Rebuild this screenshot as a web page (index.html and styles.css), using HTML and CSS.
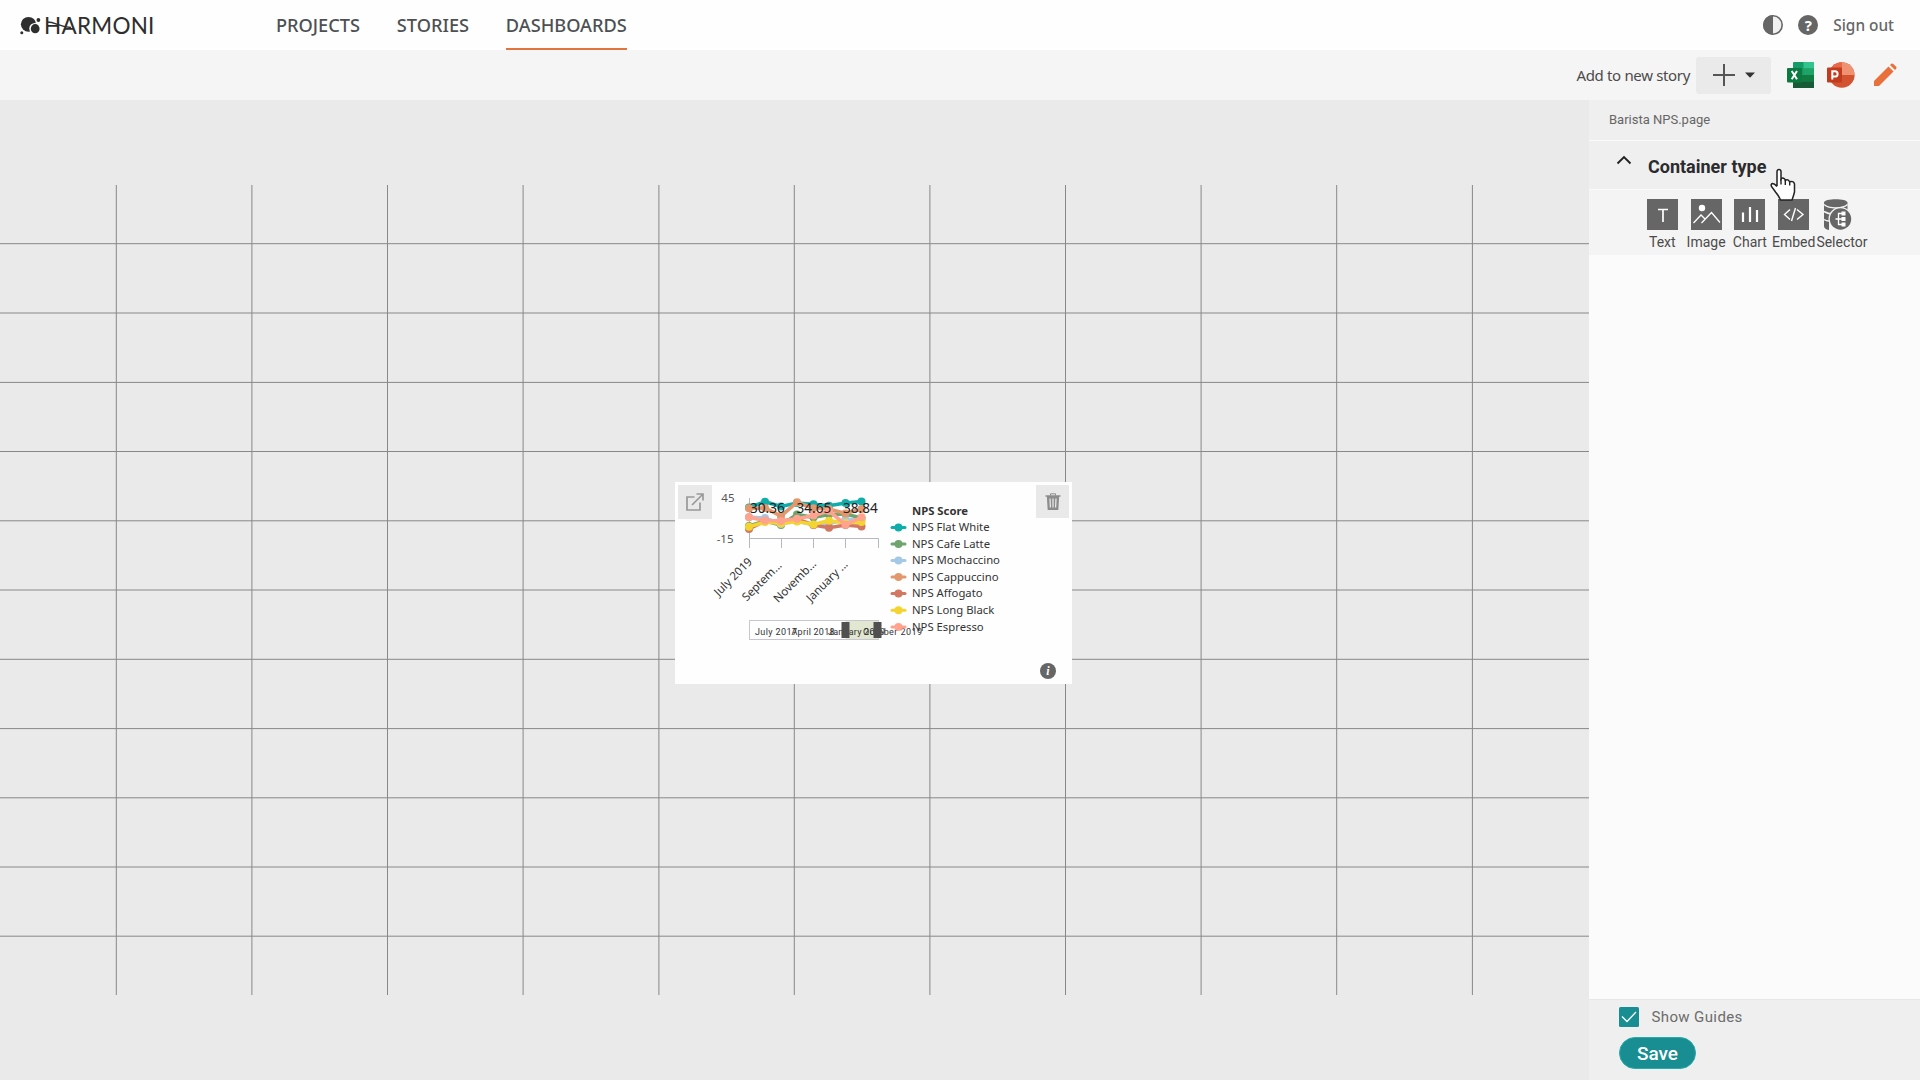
FILE: index.html
```html
<!DOCTYPE html>
<html lang="en">
<head>
<meta charset="utf-8">
<title>Harmoni - Dashboards</title>
<link rel="stylesheet" href="styles.css">
</head>
<body>
<header class="topbar">
  <a class="logo">
    <svg width="21" height="19" viewBox="0 0 21 19">
      <g fill="#2e2e2e"><ellipse cx="8.5" cy="8.300" rx="7.600" ry="7.400"/><ellipse cx="14.900" cy="12.600" rx="5.600" ry="5.700" fill="#fff"/><ellipse cx="15.200" cy="12.700" rx="4.400" ry="4.600"/><circle cx="18.400" cy="4" r="1.900"/><circle cx="1.800" cy="16.700" r="1.500"/></g>
    </svg>
    <span class="wordmark">HARMONI<svg class="swash" width="26" height="10" viewBox="0 0 26 10"><path d="M1 2C10 2 13 7 25 7.500" fill="none" stroke="#2e2e2e" stroke-width="1.300"/></svg></span>
  </a>
  <nav class="nav"><a>PROJECTS</a><a>STORIES</a><a class="active">DASHBOARDS</a></nav>
  <div class="account">
    <svg width="20" height="20" viewBox="0 0 20 20"><circle cx="10" cy="10" r="9.200" fill="#f0f0f0" stroke="#666" stroke-width="1.600"/><path d="M10 0a10 10 0 0 0 0 20z" fill="#666"/></svg>
    <span class="help">?</span>
    <a class="signout">Sign out</a>
  </div>
</header>
<div class="toolbar">
  <span class="story">Add to new story</span>
  <button class="add"><svg width="75" height="37" viewBox="0 0 75 37"><path d="M17 18H39M28 7V29" stroke="#555" stroke-width="2"/><path d="M49 15.500H59L54 20.700z" fill="#333"/></svg></button>
  <svg class="excel" width="27" height="26" viewBox="0 0 27 26"><path d="M7 0H26a1 1 0 0 1 1 1V25a1 1 0 0 1-1 1H7a1 1 0 0 1-1-1V1a1 1 0 0 1 1-1z" fill="#159c66"/><path d="M16.500 0H27V6.500H16.500z" fill="#32c48c"/><path d="M16.500 6.500H27V13H16.500z" fill="#20a366"/><path d="M6 13H27V19.500H6z" fill="#107c41"/><path d="M6 19.500H27V26H6z" fill="#185c37"/><rect y="6" width="15" height="14.500" rx="1" fill="#0b7a40"/><path d="M4.700 9 10 17.300M10 9 4.700 17.300" stroke="#fff" stroke-width="2"/></svg>
  <svg class="ppt" width="28" height="26" viewBox="0 0 28 26"><circle cx="14.800" cy="13" r="12.800" fill="#d35230"/><path d="M14.800.200A12.800 12.800 0 0 1 27.600 13H14.800z" fill="#f09272"/><path d="M14.800.200A12.800 12.800 0 0 0 2 13H14.800z" fill="#e8694a"/><rect y="5.500" width="15" height="15" rx="1" fill="#c13b1f"/><path d="M5.300 17.500V9.300H8a2.600 2.600 0 0 1 0 5.200H5.300" fill="none" stroke="#fff" stroke-width="2"/></svg>
  <svg class="pencil" width="24" height="24" viewBox="0 0 24 24" fill="#e8703a"><path d="M1 18 15.500 3.500 20.500 8.500 6 23H1z"/><path d="M17 2 18.300.700Q19.300 0 20.300.900L23.200 3.800Q24 4.800 23.200 5.700L22 7z"/></svg>
</div>
<main class="workspace">
  <section class="canvas">
    <svg class="guides" width="1589" height="980" viewBox="0 100 1589 980">
      <path d="M116.300 185V995M251.900 185V995M387.500 185V995M523.100 185V995M658.900 185V995M794.300 185V995M929.900 185V995M1065.500 185V995M1201.100 185V995M1336.700 185V995M1472.400 185V995M0 243.700H1589M0 313H1589M0 382.400H1589M0 451.500H1589M0 520.800H1589M0 590H1589M0 659.300H1589M0 728.600H1589M0 797.800H1589M0 867H1589M0 936.200H1589" stroke="#888" fill="none"/>
    </svg>
    <article class="card">
      <svg class="chart" width="397" height="202" viewBox="675 482 397 202">
        <g stroke="#b5b8bc" fill="none"><path d="M749.500 498V548M749 538.500H878.500V548M781.500 538V548M813.500 538V548M845.500 538V548"/></g>
        <g class="axis" text-anchor="end"><text x="734.500" y="502">45</text><text x="733.500" y="543">-15</text></g>
        <g class="ticks" text-anchor="end"><text transform="translate(753 562.500) rotate(-45)">July 2019</text><text transform="translate(782.500 566) rotate(-45)">Septem...</text><text transform="translate(817 564.500) rotate(-45)">Novemb...</text><text transform="translate(848.500 565) rotate(-45)">January ...</text></g>
        <g class="plot">
          <g class="teal"><polyline points="749,507.500 765,501.700 781,506.500 797,503 813.500,504.200 829,505.800 845.500,503 861.500,501.500"/></g>
          <g class="green"><polyline points="749,526 765,521 781,525 797,514.500 813.500,517.500 829,514.500 845.500,514 861.500,518"/></g>
          <g class="blue"><polyline points="749,517 765,518 781,524 797,521 813.500,525 829,523.500 845.500,519.500 861.500,520"/></g>
          <g class="orange"><polyline points="749,508.300 765,508 781,516 797,502.300 813.500,508.300 829,509 845.500,513.500 861.500,509"/></g>
          <g class="red"><polyline points="749,529 765,521 781,521 797,519 813.500,525 829,527.700 845.500,525 861.500,526.500"/></g>
          <g class="yellow"><polyline points="749,526.700 765,522 781,523.500 797,521.500 813.500,524.500 829,520.700 845.500,523 861.500,522"/></g>
          <g class="pink"><polyline points="749,517.300 765,520.500 781,521 797,518.700 813.500,515.500 829,511 845.500,524.700 861.500,517.300"/></g>
        </g>
        <g class="values"><text x="750" y="513">30.36</text><text x="796.500" y="513">34.65</text><text x="843" y="513">38.84</text></g>
        <rect x="749.500" y="620.500" width="129" height="19" fill="#fff" stroke="#c9c6cf"/>
        <rect x="845.500" y="621" width="33" height="18" fill="#e1e7d0"/>
        <g class="range"><text x="755" y="635" textLength="42">July 2017</text><text x="791.500" y="635" textLength="43">April 2018</text><text x="828" y="635" textLength="57">January 2019</text><text x="863" y="635" textLength="59">October 2019</text></g>
        <path d="M841.500 622h8v16h-8zM873.500 622h8v16h-8z" fill="#505050"/>
        <g class="legend">
          <text class="title" x="912" y="514.800">NPS Score</text>
          <g class="teal"><polyline points="892,527.500 898.500,527.500 905,527.500"/><text x="912" y="531">NPS Flat White</text></g>
          <g class="green"><polyline points="892,544 898.500,544 905,544"/><text x="912" y="548">NPS Cafe Latte</text></g>
          <g class="blue"><polyline points="892,560.500 898.500,560.500 905,560.500"/><text x="912" y="564">NPS Mochaccino</text></g>
          <g class="orange"><polyline points="892,577 898.500,577 905,577"/><text x="912" y="581">NPS Cappuccino</text></g>
          <g class="red"><polyline points="892,593.500 898.500,593.500 905,593.500"/><text x="912" y="597">NPS Affogato</text></g>
          <g class="yellow"><polyline points="892,610.200 898.500,610.200 905,610.200"/><text x="912" y="614">NPS Long Black</text></g>
          <g class="pink"><polyline points="892,627 898.500,627 905,627"/><text x="912" y="631">NPS Espresso</text></g>
        </g>
      </svg>
      <button class="cardbtn open"><svg width="18" height="18" viewBox="0 0 18 18" fill="none" stroke="#999" stroke-width="1.700"><path d="M8.500 4H1V17H14V9.500M6 12 16.500 1.500M10.500 1H17V7.500"/></svg></button>
      <button class="cardbtn trash"><svg width="16" height="17" viewBox="0 0 16 17"><path d="M.500 3H15.500" stroke="#8c8c8c" stroke-width="1.500"/><path d="M5.500 2.500V.800H10.500V2.500" fill="none" stroke="#8c8c8c"/><path d="M1.800 3H14.200L13.300 17H2.700z" fill="#8c8c8c"/><path d="M5 5.500 5.400 14.500M8 5.500V14.500M11 5.500 10.600 14.500" stroke="#eee" stroke-width="1.200"/></svg></button>
      <span class="info">i</span>
    </article>
  </section>
  <aside class="panel">
    <div class="filename">Barista NPS.page</div>
    <div class="section">
      <svg width="16" height="10" viewBox="0 0 16 10"><path d="M1.500 8.500 8 2 14.500 8.500" fill="none" stroke="#222" stroke-width="1.900"/></svg>
      <h2>Container type</h2>
    </div>
    <div class="types">
      <div class="type"><svg width="31" height="31" viewBox="0 0 31 31"><rect width="31" height="31" fill="#666"/><path d="M11 10.500H21M16 10.500V23" stroke="#fff" stroke-width="1.700"/></svg><span>Text</span></div>
      <div class="type"><svg width="31" height="31" viewBox="0 0 31 31"><rect width="31" height="31" fill="#666"/><circle cx="11" cy="9" r="3.200" fill="#fff"/><path d="M2.500 24 10 16 14 20M10.500 24 20.500 13.500 29 23.500" fill="none" stroke="#fff" stroke-width="1.300"/></svg><span>Image</span></div>
      <div class="type"><svg width="31" height="31" viewBox="0 0 31 31"><rect width="31" height="31" fill="#666"/><path d="M9 13.500V23M16 8V23M23 11V23" stroke="#fff" stroke-width="2.200"/></svg><span>Chart</span></div>
      <div class="type"><svg width="31" height="31" viewBox="0 0 31 31"><rect width="31" height="31" fill="#666"/><path d="M12 10.500 6.500 15.500 12 20.500M19 10.500 25 15.500 19 20.500M17.500 9 13.500 22" fill="none" stroke="#fff" stroke-width="1.400"/></svg><span>Embed</span></div>
      <div class="type selector"><svg width="31" height="31" viewBox="0 0 31 31"><path d="M3 3.500C3-1 26.500-1 26.500 3.500V12H14L8 20V31Q3 30 3 27z" fill="#666"/><path d="M3 5.500C8 10 22 10 26.500 5.500M3 12.500Q7 15 12 15M3 20.500Q6 22.500 9 22" fill="none" stroke="#f3f3f3" stroke-width="1.500"/><circle cx="19.500" cy="20" r="12" fill="#f3f3f3"/><circle cx="19.500" cy="20" r="10.700" fill="#666"/><path d="M14.500 20H17M21 14.500H17.500V25.500H21M17.500 20H21" fill="none" stroke="#fff" stroke-width="1.300"/><path d="M20.500 12.500h4v4h-4zM20.500 18h4v4h-4zM20.500 23.500h4v4h-4z" fill="#fff"/></svg><span>Selector</span></div>
    </div>
    <div class="empty"></div>
    <footer class="actions">
      <label class="check"><svg width="20" height="20" viewBox="0 0 20 20"><rect width="20" height="20" rx="1.500" fill="#198e92"/><path d="M3 9.500 8 14.500 17 5" fill="none" stroke="#fff" stroke-width="1.300"/></svg><span>Show Guides</span></label>
      <button class="save">Save</button>
    </footer>
  </aside>
</main>
<svg class="cursor" width="26" height="34" viewBox="0 0 26 34"><path d="M7 18V3.500Q7.200 1.500 9 1.500T11 3.500V11Q12 9.600 13.500 10.200 15 10.800 15.300 12.200 18.200 10.800 19.500 13.700 23.500 12.500 24.500 16V24Q23.500 28 22 32H10.500Q9 28 5.500 24L1.500 18.500Q.500 16 2.500 15.500 4.500 15.500 7 18.500" fill="#fff" stroke="#222" stroke-width="1.500"/><path d="M11 11V16.500M15.300 12V17M19.700 13.500V17.500" stroke="#222" stroke-width="1.400"/></svg>
<script src="chart.js"></script>
</body>
</html>
```
FILE: styles.css
```css
* { box-sizing: border-box; }
body { margin: 0; width: 1920px; height: 1080px; overflow: hidden; display: flex; flex-direction: column; font-family: "Open Sans", sans-serif; color: #4b4b4b; }
svg { display: block; flex: none; }
button { border: 0; padding: 0; font: inherit; }
.topbar { height: 50px; flex: none; display: flex; background: #fefefe; padding: 0 26px 0 20px; }
.logo { width: 256px; display: flex; align-items: flex-start; padding-top: 16px; gap: 3px; }
.wordmark { position: relative; font: 400 22.5px/19px Lato, sans-serif; letter-spacing: .25px; color: #2e2e2e; }
.swash { position: absolute; left: 2px; top: 4px; }
.nav { display: flex; gap: 36.8px; font: 500 18.2px/51px "Noto Sans", sans-serif; color: #4d5053; }
.nav a { height: 50px; }
.nav .active { border-bottom: 2px solid #e27440; }
.account { margin-left: auto; display: flex; align-items: center; gap: 15px; font: 500 15.4px "Noto Sans", sans-serif; color: #666; }
.help { width: 20px; height: 20px; border-radius: 50%; background: #666; color: #fff; font: 700 15px/20px "Noto Sans", sans-serif; text-align: center; }
.toolbar { height: 50px; flex: none; display: flex; align-items: center; justify-content: flex-end; background: #f5f5f5; padding-right: 23px; }
.story { font: 15px "Noto Sans", sans-serif; letter-spacing: -.34px; margin-right: 6px; }
.add { width: 75px; height: 37px; border-radius: 3px; background: #eaeaea; margin-right: 16px; }
.excel { margin-right: 13px; }
.ppt { margin-right: 18px; }
.workspace { flex: 1; display: flex; min-height: 0; }
.canvas { width: 1589px; flex: none; position: relative; background: #eaeaea; }
.card { position: absolute; left: 675px; top: 382px; width: 397px; height: 202px; background: #fefefe; }
.cardbtn { position: absolute; top: 3px; width: 34px; height: 34px; background: #e9e9e9; display: flex; align-items: center; justify-content: center; }
.open { left: 3px; }
.trash { right: 3px; width: 33px; height: 33px; }
.info { position: absolute; right: 16px; bottom: 5px; width: 16px; height: 16px; border-radius: 50%; background: #666; color: #fff; font: italic 700 12px/16px "Liberation Serif", serif; text-align: center; }
.chart { font-family: "Noto Sans", sans-serif; fill: #333; }
.axis { font-size: 11.5px; fill: #555; }
.ticks { font-size: 11.5px; }
.values { font-size: 13.6px; fill: #222; }
.range { font: 9px Roboto, sans-serif; }
.legend { font-size: 11.3px; }
.title { font-weight: 700; }
polyline { fill: none; stroke: currentColor; stroke-width: 3; stroke-linecap: round; }
.plot polyline { stroke-width: 3.6; }
.teal { color: #10adab; }
.green { color: #6fa36f; }
.blue { color: #a3c9e6; }
.orange { color: #e2986c; }
.red { color: #d17762; }
.yellow { color: #f3d430; }
.pink { color: #ffa38e; }
.panel { flex: 1; display: flex; flex-direction: column; background: #fbfbfb; font-family: Roboto, sans-serif; }
.filename { height: 40px; background: #efefef; font-size: 13px; line-height: 39px; padding-left: 20px; color: #666; }
.section { height: 50px; background: #efefef; border-top: 1px solid #fafafa; border-bottom: 1px solid #fafafa; display: flex; align-items: flex-start; gap: 16px; padding: 14px 0 0 27px; }
.section h2 { margin: 0; font: 700 18px/23px Roboto, sans-serif; color: #2b2b2e; }
.types { height: 65px; background: #f4f4f4; display: flex; padding: 9px 0 0 51.4px; }
.type { width: 43.8px; flex: none; display: flex; flex-direction: column; align-items: center; gap: 4px; font-size: 14px; line-height: 17px; white-space: nowrap; }
.type.selector { width: auto; align-items: flex-start; padding-left: .8px; }
.selector svg { margin-left: 5px; }
.empty { flex: 1; }
.actions { height: 81px; background: #efefef; border-top: 1px solid #e7e7e7; padding: 7px 0 0 30px; }
.check { display: flex; gap: 12.5px; align-items: flex-start; font-size: 15px; line-height: 21px; letter-spacing: .38px; color: #6c6c6c; }
.save { display: block; margin-top: 9px; width: 77px; height: 32px; border-radius: 16px; border: 1px solid #27aaa9; background: #198e92; color: #fff; font-size: 19px; font-weight: 500; }
.cursor { position: absolute; left: 1770px; top: 168px; }
```
FILE: chart.js
```js
// Adds a round point on each series line: every vertex in the plot, the middle one in the legend.
document.querySelectorAll('polyline').forEach(function (line) {
  var points = Array.from(line.points);
  if (line.closest('.legend')) points = [points[1]];
  points.forEach(function (p) {
    var dot = document.createElementNS('http://www.w3.org/2000/svg', 'circle');
    dot.setAttribute('cx', p.x);
    dot.setAttribute('cy', p.y);
    dot.setAttribute('r', 4);
    dot.setAttribute('fill', 'currentColor');
    line.after(dot);
  });
});
```
